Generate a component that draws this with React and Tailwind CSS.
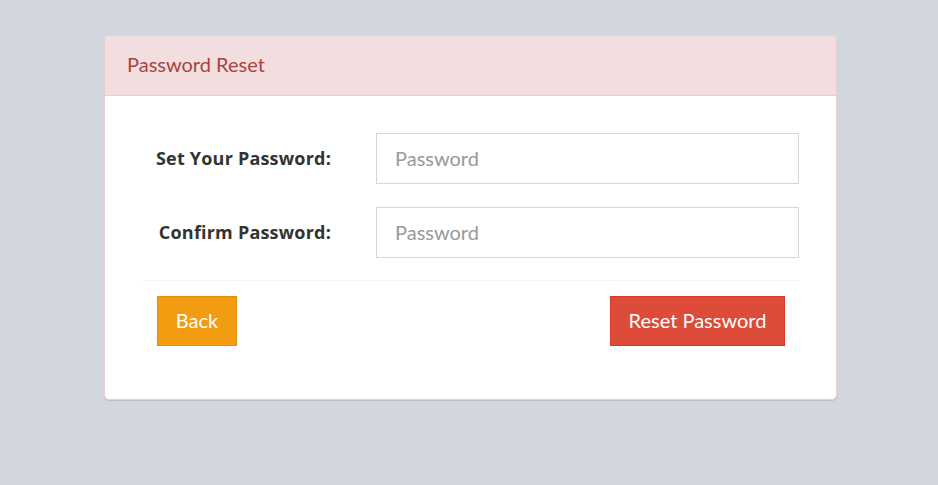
export default function App() {
  const font = { fontFamily: '"Source Sans Pro", Lato, "Noto Sans", sans-serif' };
  const labelFont = { fontFamily: '"Open Sans", "Noto Sans", sans-serif' };
  return (
    <div className="min-h-[485px] w-full bg-[#d2d6de] pt-[35px] pl-[104px] pr-[101px]" style={font}>
      <div className="rounded-[5px] border border-[#ebccd1] bg-white shadow-[0_1px_1px_rgba(0,0,0,0.1)] overflow-hidden">
        <div className="h-[60px] bg-[#f2dede] border-b border-[#ebccd1] flex items-center pl-[22px] pb-[3px] text-[20px] text-[#a94442]">
          Password Reset
        </div>
        <div className="px-[37px] pt-[37px] pb-[53px]">
          <div className="flex items-center h-[51px]">
            <label className="w-[189px] text-right text-[18px] font-bold text-[#333] tracking-[0.2px]" style={labelFont}>Set Your Password:</label>
            <input
              type="password"
              placeholder="Password"
              className="ml-[45px] flex-1 h-[51px] border border-[#d2d6de] px-[18px] pb-[2px] text-[20px] placeholder:text-[#999] outline-none"
            />
          </div>
          <div className="flex items-center h-[51px] mt-[23px]">
            <label className="w-[189px] text-right text-[18px] font-bold text-[#333] tracking-[0.2px]" style={labelFont}>Confirm Password:</label>
            <input
              type="password"
              placeholder="Password"
              className="ml-[45px] flex-1 h-[51px] border border-[#d2d6de] px-[18px] pb-[2px] text-[20px] placeholder:text-[#999] outline-none"
            />
          </div>
          <div className="mt-[22px] border-t border-[#f4f4f4]"></div>
          <div className="mt-[15px] flex justify-between px-[15px] pr-[14px]">
            <button className="h-[50px] w-[80px] bg-[#f39c12] border border-[#e08e0b] text-white text-[20px] pb-[2px]">Back</button>
            <button className="h-[50px] w-[175px] bg-[#dd4b39] border border-[#d73925] text-white text-[20px] pb-[2px]">Reset Password</button>
          </div>
        </div>
      </div>
    </div>
  );
}
